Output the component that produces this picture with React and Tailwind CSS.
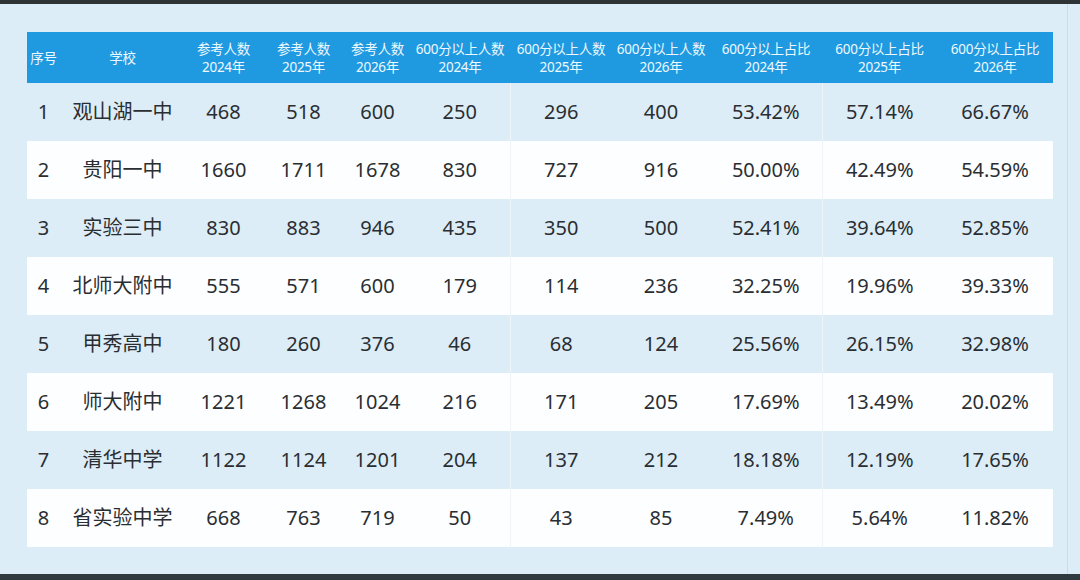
const cols = [
  { w: 33, head: ['序号'] },
  { w: 125, head: ['学校'] },
  { w: 77, head: ['参考人数', '2024年'] },
  { w: 83, head: ['参考人数', '2025年'] },
  { w: 65, head: ['参考人数', '2026年'] },
  { w: 100, head: ['600分以上人数', '2024年'] },
  { w: 102, head: ['600分以上人数', '2025年'] },
  { w: 98, head: ['600分以上人数', '2026年'] },
  { w: 112, head: ['600分以上占比', '2024年'] },
  { w: 115, head: ['600分以上占比', '2025年'] },
  { w: 116, head: ['600分以上占比', '2026年'] },
];

const rows = [
  ['1', '观山湖一中', '468', '518', '600', '250', '296', '400', '53.42%', '57.14%', '66.67%'],
  ['2', '贵阳一中', '1660', '1711', '1678', '830', '727', '916', '50.00%', '42.49%', '54.59%'],
  ['3', '实验三中', '830', '883', '946', '435', '350', '500', '52.41%', '39.64%', '52.85%'],
  ['4', '北师大附中', '555', '571', '600', '179', '114', '236', '32.25%', '19.96%', '39.33%'],
  ['5', '甲秀高中', '180', '260', '376', '46', '68', '124', '25.56%', '26.15%', '32.98%'],
  ['6', '师大附中', '1221', '1268', '1024', '216', '171', '205', '17.69%', '13.49%', '20.02%'],
  ['7', '清华中学', '1122', '1124', '1201', '204', '137', '212', '18.18%', '12.19%', '17.65%'],
  ['8', '省实验中学', '668', '763', '719', '50', '43', '85', '7.49%', '5.64%', '11.82%'],
];

const font = { fontFamily: '"Noto Sans", "Noto Sans CJK SC", sans-serif' };

export default function App() {
  return (
    <div className="w-[1080px] h-[580px] flex flex-col bg-[#2e3336] overflow-hidden" style={font}>
      <div className="h-[4px] shrink-0" />
      <div className="flex-1 flex bg-[#dcedf7]">
        <div className="w-[1068px] border-r border-[#c9dde8] pt-[28px] pl-[27px]">
          <table className="table-fixed border-collapse w-[1026px]">
            <colgroup>
              {cols.map((c, i) => (
                <col key={i} style={{ width: c.w }} />
              ))}
            </colgroup>
            <thead>
              <tr className="bg-[#1f9ae0] h-[51px]">
                {cols.map((c, i) => (
                  <th
                    key={i}
                    className="text-[#eef8ff] font-normal text-[13.5px] leading-[18px] text-center tracking-[-0.3px] px-0 whitespace-nowrap"
                  >
                    {c.head.map((h, j) => (
                      <div key={j}>{h}</div>
                    ))}
                  </th>
                ))}
              </tr>
            </thead>
            <tbody>
              {rows.map((r, ri) => (
                <tr key={ri} className={ri % 2 === 1 ? 'bg-[#fdfeff] h-[58px]' : 'h-[58px]'}>
                  {r.map((v, ci) => (
                    <td
                      key={ci}
                      className={
                        'text-[20px] text-[#2a2e32] text-center whitespace-nowrap ' +
                        (ci === 1 ? 'text-[20.5px] ' : '') +
                        (ci === 6 || ci === 9 ? 'border-l border-[#eef4f8]' : '')
                      }
                    >
                      {v}
                    </td>
                  ))}
                </tr>
              ))}
            </tbody>
          </table>
        </div>
      </div>
      <div className="h-[6px] shrink-0 bg-[#2f3a40]" />
    </div>
  );
}
